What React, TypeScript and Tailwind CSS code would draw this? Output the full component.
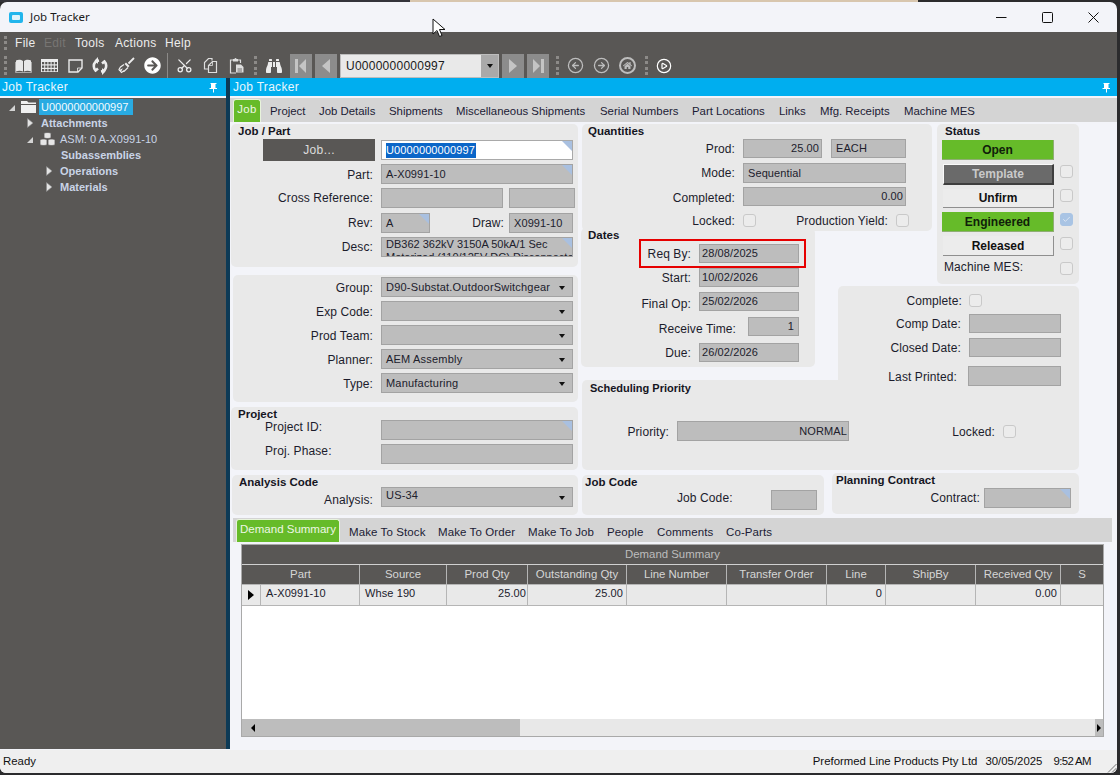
import React from 'react'
import { Scissors, CircleArrowLeft, CircleArrowRight, CirclePlay, Check as CheckIcon } from 'lucide-react'
import { FaArrowCircleRight, FaBinoculars, FaHome } from 'react-icons/fa'

const font = { fontFamily: '"Liberation Sans", Arial, sans-serif' }

const jobTabs = [
  { name: 'Project', w: 'w-[49px]' },
  { name: 'Job Details', w: 'w-[70px]' },
  { name: 'Shipments', w: 'w-[67px]' },
  { name: 'Miscellaneous Shipments', w: 'w-[144px]' },
  { name: 'Serial Numbers', w: 'w-[92px]' },
  { name: 'Part Locations', w: 'w-[87px]' },
  { name: 'Links', w: 'w-[41px]' },
  { name: 'Mfg. Receipts', w: 'w-[84px]' },
  { name: 'Machine MES', w: 'w-[80px]' },
]

const demandTabs = [
  { name: 'Make To Stock', w: 'w-[89px]' },
  { name: 'Make To Order', w: 'w-[90px]' },
  { name: 'Make To Job', w: 'w-[79px]' },
  { name: 'People', w: 'w-[50px]' },
  { name: 'Comments', w: 'w-[69px]' },
  { name: 'Co-Parts', w: 'w-[60px]' },
]

const columns = 'grid-cols-[118px_87px_81px_99px_100px_100px_59px_90px_85px_1fr]'

function Box({ className = '', text = '', corner = false, right = false, combo = false, children }: {
  className?: string
  text?: string
  corner?: boolean
  right?: boolean
  combo?: boolean
  children?: React.ReactNode
}) {
  return (
    <div className={`relative flex h-[20px] shrink-0 items-center overflow-hidden border border-[#a3a3a3] bg-[#bdbdbd] px-[4px] text-[11px] text-[#20202c] ${combo ? 'tracking-[0.2px]' : 'tracking-[0.1px]'} ${right ? 'justify-end' : ''} ${className}`}>
      {text && <span className="whitespace-nowrap">{text}</span>}
      {children}
      {corner && <span className="absolute right-0 top-0 h-[10px] w-[10px] bg-[#a9c0e0] [clip-path:polygon(0_0,100%_0,100%_100%)]" />}
      {combo && <span className="absolute right-[7px] top-[8px] h-0 w-0 border-x-[3.5px] border-t-[4px] border-x-transparent border-t-[#111]" />}
    </div>
  )
}

function Label({ className = '', children }: { className?: string; children: React.ReactNode }) {
  return <div className={`shrink-0 whitespace-nowrap text-right text-[12px] leading-[14px] tracking-[0.1px] text-[#1c1c2c] ${className}`}>{children}</div>
}

function Title({ className = '', children }: { className?: string; children: React.ReactNode }) {
  return <div className={`whitespace-nowrap text-[11.5px] font-bold leading-[14px] text-[#15151f] ${className}`}>{children}</div>
}

function Tick({ className = '', checked = false }: { className?: string; checked?: boolean }) {
  return (
    <span className={`flex h-[13px] w-[13px] shrink-0 items-center justify-center rounded-[3px] border ${checked ? 'border-[#a9c4e4] bg-[#a9c4e4]' : 'border-[#c9c9c9] bg-[#ececec]'} ${className}`}>
      {checked && <CheckIcon size={9} color="#e8eef6" strokeWidth={2} />}
    </span>
  )
}

function Panel({ className = '', children }: { className?: string; children: React.ReactNode }) {
  return <div className={`shrink-0 rounded-[5px] bg-[#e9e9e9] ${className}`}>{children}</div>
}

function Grip() {
  return <span className="block h-[19px] w-0 shrink-0 border-l-[3px] border-dotted border-[#8c8a88]" />
}

function ToolIcon({ x, children }: { x: string; children: React.ReactNode }) {
  return <span className={`flex h-[18px] shrink-0 items-center justify-center ${x}`}>{children}</span>
}

function BookIcon() {
  return (
    <svg width="17" height="15" viewBox="0 0 17 15">
      <path d="M1 2.500C3 1.500 6 1.500 8 3v10.500C6 12.500 3 12.500 1 13.500z" fill="#e8e8e8" />
      <path d="M16 2.500C14 1.500 11 1.500 9 3v10.500c2-1 5-1 7 0z" fill="#e8e8e8" />
      <path d="M.5 4v10.500h16V4" fill="none" stroke="#bdbdbd" strokeWidth=".8" />
    </svg>
  )
}

function GridIcon() {
  return (
    <svg width="17" height="13" viewBox="0 0 17 13">
      <rect width="17" height="13" fill="#ececec" />
      <g fill="#595755">
        {[3, 6.500, 10].map((y) =>
          [1, 4.200, 7.400, 10.600, 13.800].map((x) => <rect key={`${x}-${y}`} x={x} y={y} width="2.200" height="2.300" />),
        )}
      </g>
    </svg>
  )
}

function NoteIcon() {
  return (
    <svg width="15" height="14" viewBox="0 0 15 14">
      <path d="M1 1h13v8l-4 4H1z" fill="none" stroke="#ececec" strokeWidth="1.400" />
      <path d="M9.500 13V9H14" fill="none" stroke="#ececec" strokeWidth=".8" />
    </svg>
  )
}

function SyncIcon() {
  return (
    <svg width="16" height="18" viewBox="0 0 16 18">
      <path d="M7 3.500C3.500 4 1.800 6.500 1.800 9.200c0 1.700.7 3.200 1.800 4.300L6 11.500" fill="none" stroke="#ececec" strokeWidth="2.600" />
      <path d="M9 14.500c3.500-.5 5.200-3 5.200-5.700 0-1.700-.7-3.200-1.800-4.300L10 6.500" fill="none" stroke="#ececec" strokeWidth="2.600" />
      <path d="M6 0v7L2.500 3.500zM10 11v7l3.500-3.500z" fill="#ececec" />
    </svg>
  )
}

function BroomIcon() {
  return (
    <svg width="17" height="17" viewBox="0 0 17 17">
      <path d="M16 1 10.500 6.500" stroke="#ececec" strokeWidth="1.800" />
      <path d="M8 5.500l3.500 3.500-1.500 1.500-3.500-3.500z" fill="#ececec" />
      <path d="M6 7.500 2.500 10 1 12.500l.5 1 2-1-1 2 1 1 2-1.500.5.500L10 10.500" fill="none" stroke="#ececec" strokeWidth="1.200" />
    </svg>
  )
}

function CopyIcon() {
  return (
    <svg width="15" height="17" viewBox="0 0 15 17">
      <path d="M9 3.500V1.500H5.500L1.500 5.500v6.500H5" fill="none" stroke="#dedede" strokeWidth="1.200" />
      <path d="M9.500 4.500h4v11h-8v-7z" fill="none" stroke="#dedede" strokeWidth="1.200" />
      <path d="M9.500 4.500v4h-4" fill="none" stroke="#dedede" strokeWidth=".8" />
    </svg>
  )
}

function PasteIcon() {
  return (
    <svg width="15" height="17" viewBox="0 0 15 17">
      <path d="M4 3H1.500v13H7" fill="none" stroke="#dedede" strokeWidth="1.200" />
      <path d="M9 3h2.500v3" fill="none" stroke="#dedede" strokeWidth="1.200" />
      <path d="M4 2h1.500a1 1 0 0 1 2 0H9v2.500H4z" fill="#dedede" />
      <path d="M7 7.500h5l2.500 2.500v5.500H7z" fill="#dedede" />
      <path d="M8.500 12h4.500M8.500 14h4.500" stroke="#595755" strokeWidth=".8" />
    </svg>
  )
}

function NavBtn({ dir, bar = false, className = '' }: { dir: 'l' | 'r'; bar?: boolean; className?: string }) {
  return (
    <span className={`flex h-[24px] w-[22px] shrink-0 items-center justify-center bg-[#8c8c8c] ${className}`}>
      <svg width="14" height="16" viewBox="0 0 14 16">
        {dir === 'l' ? <path d={bar ? 'M12 1v14L5 8z' : 'M11 1v14L3 8z'} fill="#c4c4c4" /> : <path d={bar ? 'M2 1v14l7-7z' : 'M3 1v14l8-7z'} fill="#c4c4c4" />}
        {bar && <rect x={dir === 'l' ? 1 : 10} y="1" width="3" height="14" fill="#c4c4c4" />}
      </svg>
    </span>
  )
}

function Pin() {
  return (
    <svg width="9" height="11" viewBox="0 0 9 11">
      <path d="M1.500 1h6v1h-1v4h1.500v1H5v3.500H4V7H.5V6H2V2H1.500z" fill="#fff" />
    </svg>
  )
}

function TreeArrow({ open = false, className = '' }: { open?: boolean; className?: string }) {
  return (
    <svg width="8" height="12" viewBox="0 0 8 12" className={`shrink-0 ${className}`}>
      {open ? <path d="M7 4v6H1z" fill="#d4d4d4" /> : <path d="M1.500 1.500 7 6l-5.500 4.500z" fill="#e4e4e4" stroke="#8b8b8b" strokeWidth=".6" />}
    </svg>
  )
}

function AsmIcon() {
  return (
    <svg width="17" height="15" viewBox="0 0 17 15" className="block shrink-0">
      <g fill="#e6e6e6" stroke="#595755" strokeWidth=".8">
        <path d="M5 1.500c0-1.300 7-1.300 7 0v4c0 1.300-7 1.300-7 0z" />
        <path d="M1 8c0-1.300 7-1.300 7 0v4.500c0 1.300-7 1.300-7 0z" />
        <path d="M9 8c0-1.300 7-1.300 7 0v4.500c0 1.300-7 1.300-7 0z" />
      </g>
    </svg>
  )
}

function Cursor() {
  return (
    <svg width="14" height="21" viewBox="0 0 14 21" className="absolute left-[432px] top-[18px] z-30">
      <path d="M1 1v15l4-3.500 2.500 6 2.500-1-2.500-6H13z" fill="#fff" stroke="#111" strokeWidth="1" />
    </svg>
  )
}

export default function App() {
  return (
    <div style={font} className="relative flex h-[775px] w-[1120px] flex-col overflow-hidden bg-[#2b2b2d]">
      <Cursor />

      {/* desktop showing above the window */}
      <div className="flex h-[2px] shrink-0">
        <div className="w-[410px] bg-[#34343a]" />
        <div className="w-[508px] bg-[#d8c6ae]" />
      </div>

      <div className="flex h-[771px] w-[1117px] shrink-0 flex-col overflow-hidden rounded-b-[6px] rounded-t-[7px] bg-[#f3f4f9]">
        {/* title bar */}
        <div className="flex h-[30px] shrink-0 items-center pl-[9px] pr-[18px]">
          <span className="flex h-[11px] w-[14px] items-center justify-center rounded-[2px] bg-[#22b5ec]">
            <span className="h-[5px] w-[8px] rounded-[1px] bg-[#dff3fb]" />
          </span>
          <span style={{ fontFamily: '"Noto Sans", sans-serif' }} className="ml-[7px] text-[11.5px] text-[#1a1a1a]">Job Tracker</span>
          <div className="ml-auto flex items-center gap-[35px]">
            <svg width="11" height="11" viewBox="0 0 11 11"><path d="M0 5.500h10.500" stroke="#111" /></svg>
            <svg width="11" height="11" viewBox="0 0 11 11"><rect x=".5" y=".5" width="10" height="10" rx="1" fill="none" stroke="#111" /></svg>
            <svg width="11" height="11" viewBox="0 0 11 11"><path d="M.5.500l10 10M10.500.500l-10 10" stroke="#111" /></svg>
          </div>
        </div>

        {/* menu */}
        <div className="flex h-[21px] shrink-0 items-center bg-[#595755] pl-[4px] text-[12px] tracking-[0.3px] text-[#ececec]">
          <span className="h-[14px] w-0 border-l-[3px] border-dotted border-[#8c8a88]" />
          <span className="ml-[8px] w-[29px]">File</span>
          <span className="w-[31px] text-[#777573]">Edit</span>
          <span className="w-[40px]">Tools</span>
          <span className="w-[50px]">Actions</span>
          <span>Help</span>
        </div>

        {/* toolbar */}
        <div className="flex h-[25px] shrink-0 items-center bg-[#595755] pl-[4px] text-[#ececec]">
          <Grip />
          <ToolIcon x="ml-[8px] w-[17px]"><BookIcon /></ToolIcon>
          <ToolIcon x="ml-[9px] w-[17px]"><GridIcon /></ToolIcon>
          <ToolIcon x="ml-[9px] w-[16px]"><NoteIcon /></ToolIcon>
          <ToolIcon x="ml-[9px] w-[16px]"><SyncIcon /></ToolIcon>
          <ToolIcon x="ml-[10px] w-[17px]"><BroomIcon /></ToolIcon>
          <ToolIcon x="ml-[9px] w-[17px]"><FaArrowCircleRight size={17} color="#fff" /></ToolIcon>
          <span className="ml-[6px] h-[25px] w-px shrink-0 bg-[#8c8a88]" />
          <ToolIcon x="ml-[8px] w-[17px]"><Scissors size={17} strokeWidth={1.8} className="-rotate-90" /></ToolIcon>
          <ToolIcon x="ml-[10px] w-[15px]"><CopyIcon /></ToolIcon>
          <ToolIcon x="ml-[11px] w-[15px]"><PasteIcon /></ToolIcon>
          <span className="ml-[10px]"><Grip /></span>
          <ToolIcon x="ml-[8px] w-[17px]"><FaBinoculars size={16} /></ToolIcon>
          <NavBtn dir="l" bar className="ml-[8px]" />
          <NavBtn dir="l" className="ml-[3px]" />
          <div className="ml-[3px] flex h-[24px] w-[159px] shrink-0 items-center border border-[#bdbdbd] bg-[#e9e9e9] pl-[5px] text-[12px] tracking-[0.25px] text-[#1a1a1a]">
            <span>U0000000000997</span>
            <span className="ml-auto flex h-full w-[17px] items-center justify-center bg-[#a9a9a9]">
              <span className="h-0 w-0 border-x-[3.500px] border-t-[4px] border-x-transparent border-t-[#111]" />
            </span>
          </div>
          <NavBtn dir="r" className="ml-[3px]" />
          <NavBtn dir="r" bar className="ml-[3px]" />
          <span className="ml-[7px]"><Grip /></span>
          <ToolIcon x="ml-[8px] w-[17px] text-[#bdbdbd]"><CircleArrowLeft size={17} strokeWidth={1.8} /></ToolIcon>
          <ToolIcon x="ml-[9px] w-[17px] text-[#bdbdbd]"><CircleArrowRight size={17} strokeWidth={1.8} /></ToolIcon>
          <ToolIcon x="ml-[9px] w-[17px] text-[#bdbdbd]">
            <span className="flex h-[17px] w-[17px] items-center justify-center rounded-full border-2 border-[#bdbdbd]"><FaHome size={9} /></span>
          </ToolIcon>
          <span className="ml-[9px]"><Grip /></span>
          <ToolIcon x="ml-[8px] w-[16px] text-white"><CirclePlay size={16} strokeWidth={1.8} /></ToolIcon>
        </div>

        {/* body */}
        <div className="flex min-h-0 flex-1">
          {/* tree */}
          <div className="flex w-[226px] shrink-0 flex-col bg-[#595755]">
            <div className="flex h-[18px] shrink-0 items-center justify-between bg-[#00aeef] pl-[2px] pr-[8px] text-[12px] tracking-[0.3px] text-[#e8f6fc]">
              <span>Job Tracker</span>
              <Pin />
            </div>
            <div className="h-[2px] shrink-0 bg-[#f3f4f9]" />
            <div className="flex flex-col text-[11px] text-[#c9d4e6]">
              <div className="mt-px flex h-[16px] items-center pl-[8px]">
                <TreeArrow open />
                <svg width="17" height="14" viewBox="0 0 17 14" className="ml-[4px] shrink-0">
                  <path d="M1 2.500V1h6l1.500 1.500H16V4H1zM1 5h15v8H1z" fill="#f0f0f0" />
                </svg>
                <span className="ml-[2px] flex h-[16px] w-[94px] items-center bg-[#29abe2] pl-[2px] text-[#f4fbfe]">U0000000000997</span>
              </div>
              <div className="flex h-[16px] items-center pl-[26px] font-bold">
                <TreeArrow />
                <span className="ml-[7px]">Attachments</span>
              </div>
              <div className="flex h-[16px] items-center pl-[26px]">
                <TreeArrow open />
                <span className="ml-[5px]"><AsmIcon /></span>
                <span className="ml-[4px]">ASM: 0 A-X0991-10</span>
              </div>
              <div className="flex h-[16px] items-center pl-[61px] font-bold">Subassemblies</div>
              <div className="flex h-[16px] items-center pl-[45px] font-bold">
                <TreeArrow />
                <span className="ml-[7px]">Operations</span>
              </div>
              <div className="flex h-[16px] items-center pl-[45px] font-bold">
                <TreeArrow />
                <span className="ml-[7px]">Materials</span>
              </div>
            </div>
          </div>

          <div className="w-[4px] shrink-0 bg-[#0d3a56]" />

          {/* main */}
          <div className="flex min-w-0 flex-1 flex-col">
            <div className="flex h-[18px] shrink-0 items-center justify-between bg-[#00aeef] pl-[3px] pr-[6px] text-[12px] tracking-[0.3px] text-[#e8f6fc]">
              <span>Job Tracker</span>
              <Pin />
            </div>
            <div className="h-[2px] shrink-0" />

            {/* job tabs */}
            <div className="flex h-[24px] shrink-0 bg-[#d4d4d4] pl-[3px] text-[11.4px] text-[#1b1b35]">
              <div className="mt-px flex h-[23px] w-[28px] items-center justify-center rounded-t-[3px] border border-b-0 border-[#e8f3dc] bg-[#66bb29] pb-[3px] tracking-[0.3px] text-[#eef7e5]">Job</div>
              <div className="ml-[9px] flex items-center pt-[4px]">
                {jobTabs.map((t) => (
                  <span key={t.name} className={`${t.w} whitespace-nowrap`}>{t.name}</span>
                ))}
              </div>
            </div>

            {/* form */}
            <div className="flex h-[393px] shrink-0 pt-[2px]">
              {/* left column */}
              <div className="ml-px flex w-[347px] shrink-0 flex-col">
                <Panel className="h-[143px]">
                  <Title className="h-[15px] pl-[7px]">Job / Part</Title>
                  <div className="flex items-start">
                    <div className="ml-[32px] flex h-[22px] w-[112px] shrink-0 items-center justify-center bg-[#595755] text-[12px] tracking-[0.4px] text-[#dcdcdc]">Job...</div>
                    <Box className="ml-[6px] mt-px w-[192px] border-[#a9a9a9] bg-white" corner>
                      <span className="absolute left-[4px] top-[2px] h-[15px] bg-[#0b66c8] pr-px text-[11px] leading-[15px] text-white">U0000000000997</span>
                    </Box>
                  </div>
                  <div className="mt-[3px] flex items-center">
                    <Label className="w-[142px] pt-px">Part:</Label>
                    <Box className="ml-[8px] w-[192px]" text="A-X0991-10" corner />
                  </div>
                  <div className="mt-[4px] flex items-center">
                    <Label className="w-[142px]">Cross Reference:</Label>
                    <Box className="ml-[8px] w-[122px]" />
                    <Box className="ml-[6px] w-[66px]" />
                  </div>
                  <div className="mt-[5px] flex items-center">
                    <Label className="w-[142px]">Rev:</Label>
                    <Box className="ml-[8px] w-[49px]" text="A" corner />
                    <Label className="w-[74px]">Draw:</Label>
                    <Box className="ml-[5px] w-[64px]" text="X0991-10" />
                  </div>
                  <div className="mt-[4px] flex items-center">
                    <Label className="w-[142px]">Desc:</Label>
                    <Box className="ml-[8px] w-[192px] !items-start" corner>
                      <span className="whitespace-nowrap text-[11px] leading-[13px] tracking-normal">DB362 362kV 3150A 50kA/1 Sec<br />Motorized (110/125V DC) Disconnector</span>
                    </Box>
                  </div>
                </Panel>

                <Panel className="ml-[2px] mt-[8px] h-[127px] pt-[2px]">
                  {[
                    { l: 'Group:', t: 'D90-Substat.OutdoorSwitchgear' },
                    { l: 'Exp Code:', t: '' },
                    { l: 'Prod Team:', t: '' },
                    { l: 'Planner:', t: 'AEM Assembly' },
                    { l: 'Type:', t: 'Manufacturing' },
                  ].map((r) => (
                    <div key={r.l} className="mb-[4px] flex items-center">
                      <Label className="w-[140px] pt-px">{r.l}</Label>
                      <Box className="ml-[8px] w-[192px]" text={r.t} combo />
                    </div>
                  ))}
                </Panel>

                <Panel className="mt-[5px] h-[63px]">
                  <Title className="h-[13px] pl-[7px]">Project</Title>
                  <div className="flex items-start">
                    <Label className="ml-[34px] w-[116px] !text-left">Project ID:</Label>
                    <Box className="w-[192px]" corner />
                  </div>
                  <div className="mt-[4px] flex items-start">
                    <Label className="ml-[34px] w-[116px] !text-left">Proj. Phase:</Label>
                    <Box className="w-[192px]" />
                  </div>
                </Panel>

                <Panel className="ml-px mt-[5px] h-[40px] w-[346px]">
                  <Title className="h-[12px] pl-[7px]">Analysis Code</Title>
                  <div className="flex items-center">
                    <Label className="w-[141px] pt-[5px]">Analysis:</Label>
                    <Box className="ml-[8px] w-[192px] !pb-[3px]" text="US-34" combo />
                  </div>
                </Panel>
              </div>

              {/* right side */}
              <div className="ml-[3px] flex w-[498px] shrink-0 flex-col">
                <div className="flex h-[269px] shrink-0">
                  <div className="flex w-[351px] shrink-0 flex-col">
                    <Panel className="ml-px h-[107px] w-[350px]">
                      <Title className="h-[15px] pl-[6px]">Quantities</Title>
                      <div className="flex items-center">
                        <Label className="w-[153px]">Prod:</Label>
                        <Box className="ml-[8px] !h-[19px] w-[79px] !pr-[2px]" text="25.00" right />
                        <Box className="ml-[9px] !h-[19px] w-[75px]" text="EACH" />
                      </div>
                      <div className="mt-[5px] flex items-center">
                        <Label className="w-[153px]">Mode:</Label>
                        <Box className="ml-[8px] w-[163px]" text="Sequential" />
                      </div>
                      <div className="mt-[4px] flex items-center">
                        <Label className="w-[153px] pt-[2px]">Completed:</Label>
                        <Box className="ml-[8px] !h-[19px] w-[163px] !pr-[2px]" text="0.00" right />
                      </div>
                      <div className="mt-[8px] flex items-start">
                        <Label className="w-[153px]">Locked:</Label>
                        <Tick className="ml-[8px]" />
                        <Label className="w-[132px]">Production Yield:</Label>
                        <Tick className="ml-[8px]" />
                      </div>
                    </Panel>

                    <Panel className="-mt-[3px] h-[139px] w-[234px]">
                      <Title className="h-[11px] pl-[7px] leading-[12px]">Dates</Title>
                      <div className="ml-[58px] flex h-[29px] w-[167px] items-center border-2 border-[#e60000]">
                        <Label className="w-[50px]">Req By:</Label>
                        <Box className="ml-[8px] !h-[19px] w-[100px] !pl-[2px]" text="28/08/2025" />
                      </div>
                      <div className="flex items-center">
                        <Label className="w-[110px] pt-px">Start:</Label>
                        <Box className="ml-[8px] !h-[19px] w-[100px] !pl-[2px]" text="10/02/2026" />
                      </div>
                      <div className="mt-[5px] flex items-center">
                        <Label className="w-[110px] pt-[5px]">Final Op:</Label>
                        <Box className="ml-[8px] !h-[19px] w-[100px] !pl-[2px]" text="25/02/2026" />
                      </div>
                      <div className="mt-[6px] flex items-center">
                        <Label className="w-[155px] pt-[5px]">Receive Time:</Label>
                        <Box className="ml-[12px] !h-[19px] w-[51px]" text="1" right />
                      </div>
                      <div className="mt-[7px] flex items-center">
                        <Label className="w-[110px]">Due:</Label>
                        <Box className="ml-[8px] !h-[19px] w-[100px] !pl-[2px]" text="26/02/2026" />
                      </div>
                    </Panel>
                  </div>

                  <div className="ml-[5px] flex w-[142px] shrink-0 flex-col">
                    <Panel className="h-[160px]">
                      <Title className="h-[16px] pl-[8px]">Status</Title>
                      <div className="flex items-start pl-[5px]">
                        <div className="flex h-[20px] w-[112px] items-center justify-center border-b border-r border-[#8fae74] bg-[#66bb29] text-[12px] font-bold text-[#10200a]">Open</div>
                      </div>
                      <div className="mt-[4px] flex items-start pl-[6px]">
                        <div className="flex h-[21px] w-[111px] items-center justify-center border border-b-2 border-r-2 border-[#fafafa] border-b-[#3e3e3e] border-r-[#3e3e3e] bg-[#6a6a6a] text-[12px] font-bold text-[#c9c9c9]">Template</div>
                        <Tick className="ml-[6px] mt-px" />
                      </div>
                      <div className="mt-[4px] flex items-start pl-[6px]">
                        <div className="flex h-[19px] w-[111px] items-center justify-center border-b border-r border-[#8f8f8f] bg-[#ececec] text-[12px] font-bold text-[#111]">Unfirm</div>
                        <Tick className="ml-[6px]" />
                      </div>
                      <div className="mt-[4px] flex items-start pl-[5px]">
                        <div className="flex h-[20px] w-[112px] items-center justify-center border-b border-r border-[#8fae74] bg-[#66bb29] text-[12px] font-bold text-[#10200a]">Engineered</div>
                        <Tick className="ml-[6px] mt-px" checked />
                      </div>
                      <div className="mt-[4px] flex items-start pl-[6px]">
                        <div className="flex h-[20px] w-[111px] items-center justify-center border-b border-r border-[#8f8f8f] bg-[#ececec] text-[12px] font-bold text-[#111]">Released</div>
                        <Tick className="ml-[6px] mt-px" />
                      </div>
                      <div className="mt-[6px] flex items-start">
                        <Label className="-mt-[2px] ml-[7px] w-[116px] !text-left">Machine MES:</Label>
                        <Tick />
                      </div>
                    </Panel>

                    <Panel className="relative z-10 -ml-[99px] mt-[2px] h-[107px] w-[241px] pt-[6px]">
                      <div className="flex items-center">
                        <Label className="w-[124px] pt-[2px]">Complete:</Label>
                        <Tick className="ml-[7px]" />
                      </div>
                      <div className="mt-[6px] flex items-center">
                        <Label className="w-[123px]">Comp Date:</Label>
                        <Box className="ml-[8px] !h-[19px] w-[92px]" />
                      </div>
                      <div className="mt-[5px] flex items-center">
                        <Label className="w-[123px]">Closed Date:</Label>
                        <Box className="ml-[8px] !h-[19px] w-[92px]" />
                      </div>
                      <div className="mt-[9px] flex items-center">
                        <Label className="w-[119px] pt-[2px]">Last Printed:</Label>
                        <Box className="ml-[11px] w-[93px]" />
                      </div>
                    </Panel>
                  </div>
                </div>

                <Panel className="-mt-[13px] ml-px h-[90px] w-[497px]">
                  <Title className="h-[41px] pl-[8px] pt-px !text-[11px]">Scheduling Priority</Title>
                  <div className="flex items-center">
                    <Label className="w-[87px] pt-px">Priority:</Label>
                    <Box className="ml-[8px] w-[172px] !pr-px" text="NORMAL" right />
                    <Label className="w-[146px] pt-px">Locked:</Label>
                    <Tick className="ml-[8px]" />
                  </div>
                </Panel>

                <div className="mt-[3px] flex items-start">
                  <Panel className="ml-px mt-[2px] h-[40px] w-[242px]">
                    <Title className="h-[15px] pl-[3px]">Job Code</Title>
                    <div className="flex items-center">
                      <Label className="ml-[95px] w-[94px] pb-[4px] !text-left">Job Code:</Label>
                      <Box className="w-[46px]" />
                    </div>
                  </Panel>
                  <Panel className="ml-[8px] h-[41px] w-[247px]">
                    <Title className="h-[15px] pl-[4px]">Planning Contract</Title>
                    <div className="flex items-center">
                      <Label className="w-[148px]">Contract:</Label>
                      <Box className="ml-[4px] w-[87px]" corner />
                    </div>
                  </Panel>
                </div>
              </div>
            </div>

            {/* demand tabs */}
            <div className="ml-[3px] mt-[3px] flex h-[24px] w-[879px] shrink-0 bg-[#d4d4d4] pl-[3px] text-[11.5px] text-[#1b1b35]">
              <div className="mt-px flex h-[23px] w-[104px] shrink-0 items-center justify-center whitespace-nowrap rounded-t-[3px] border border-b-0 border-[#e8f3dc] bg-[#66bb29] pb-[3px] text-[#eef7e5]">Demand Summary</div>
              <div className="ml-[9px] flex items-center pt-[5px]">
                {demandTabs.map((t) => (
                  <span key={t.name} className={`${t.w} whitespace-nowrap tracking-[0.1px]`}>{t.name}</span>
                ))}
              </div>
            </div>

            {/* demand grid */}
            <div className="ml-[11px] mt-[2px] flex h-[193px] w-[863px] shrink-0 flex-col border border-[#a9a9a9] bg-white text-[11.4px]">
              <div className="flex h-[20px] shrink-0 items-center justify-center border-b border-[#d0d0d0] bg-[#595755] pt-px text-[#bdbdbd]">Demand Summary</div>
              <div className={`grid h-[20px] shrink-0 ${columns} border-b border-[#b5b5b5] bg-[#595755] text-[#d6d6d6]`}>
                {['Part', 'Source', 'Prod Qty', 'Outstanding Qty', 'Line Number', 'Transfer Order', 'Line', 'ShipBy', 'Received Qty', 'S'].map((h) => (
                  <div key={h} className="flex items-center justify-center overflow-hidden whitespace-nowrap border-r border-[#b5b5b5] pt-px last:border-r-0">{h}</div>
                ))}
              </div>
              <div className={`grid h-[21px] shrink-0 ${columns} border-b border-[#b5b5b5] bg-[#e9e9e9] text-[11px] tracking-[0.1px] text-[#20202c]`}>
                <div className="flex border-r border-[#b5b5b5]">
                  <span className="flex w-[19px] shrink-0 items-center justify-center border-r border-[#b5b5b5]">
                    <span className="h-0 w-0 border-y-[5px] border-l-[6px] border-y-transparent border-l-black" />
                  </span>
                  <span className="flex items-center pb-[3px] pl-[5px]">A-X0991-10</span>
                </div>
                <div className="flex items-center border-r border-[#b5b5b5] pb-[3px] pl-[5px]">Whse 190</div>
                <div className="flex items-center justify-end border-r border-[#b5b5b5] pb-[3px] pr-px">25.00</div>
                <div className="flex items-center justify-end border-r border-[#b5b5b5] pb-[3px] pr-[3px]">25.00</div>
                <div className="border-r border-[#b5b5b5]" />
                <div className="border-r border-[#b5b5b5]" />
                <div className="flex items-center justify-end border-r border-[#b5b5b5] pb-[3px] pr-[3px]">0</div>
                <div className="border-r border-[#b5b5b5]" />
                <div className="flex items-center justify-end border-r border-[#b5b5b5] pb-[3px] pr-[3px]">0.00</div>
                <div />
              </div>
              <div className="flex-1" />
              <div className="flex h-[17px] shrink-0 bg-[#e8e8e8]">
                <div className="flex w-[278px] shrink-0 items-center bg-[#bdbdbd] pl-[9px]">
                  <span className="h-0 w-0 border-y-[4px] border-r-[4px] border-y-transparent border-r-black" />
                </div>
                <div className="ml-auto flex w-[8px] shrink-0 items-center justify-center bg-[#bdbdbd]">
                  <span className="h-0 w-0 border-y-[4px] border-l-[4px] border-y-transparent border-l-black" />
                </div>
              </div>
            </div>
          </div>
        </div>

        {/* status bar */}
        <div className="relative mt-[1px] flex h-[23px] shrink-0 items-center justify-between bg-[#efefef] pl-[3px] pr-[26px] pt-px text-[11.4px] text-[#111]">
          <span>Ready</span>
          <span className="flex">
            <span>Preformed Line Products Pty Ltd</span>
            <span className="ml-[8px]">30/05/2025</span>
            <span className="ml-[11px] tracking-[-0.6px]">9:52 AM</span>
          </span>
          <svg width="10" height="10" viewBox="0 0 10 10" className="absolute bottom-0 right-0">
            <path d="M9.500 1 1 9.500M9.500 5 5 9.500" stroke="#777" fill="none" />
          </svg>
        </div>
      </div>
    </div>
  )
}
